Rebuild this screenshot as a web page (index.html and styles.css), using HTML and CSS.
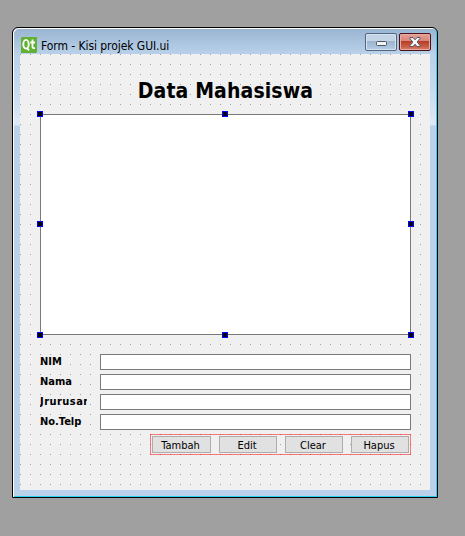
FILE: index.html
```html
<!DOCTYPE html>
<html lang="id">
<head>
<meta charset="utf-8">
<title>Form - Kisi projek GUI.ui</title>
<link rel="stylesheet" href="styles.css">
</head>
<body>
<main class="window">
  <header class="titlebar">
    <svg class="logo" width="16" height="16" viewBox="0 0 16 16"><path fill="#63b132" d="M1 0h15v15l-1 1H0V1z"/><ellipse cx="5" cy="7.2" rx="2.7" ry="4.3" fill="none" stroke="#fff" stroke-width="1.9"/><path d="M6 11l2 2.3M11.5 2.5v7.3q0 1.7 2.5 1.3M9.3 5.5H14" fill="none" stroke="#fff" stroke-width="1.8"/></svg>
    <span class="caption">Form - Kisi projek GUI.ui</span>
    <div class="controls">
      <button class="control minimize" aria-label="Minimize"><svg width="12" height="6" viewBox="0 0 12 6"><rect x="1.5" y=".5" width="10" height="4" rx="1" fill="#f4f4f2" stroke="#4a5464"/></svg></button>
      <button class="control close" aria-label="Close"><svg width="12" height="10" viewBox="0 0 12 10"><path d="M1 .5h3l2 2.3L8 .5h3v1L8.2 5 11 8.5v1H8L6 7.2 4 9.5H1v-1L3.8 5 1 1.5z" fill="#f5f5f5" stroke="#555866"/></svg></button>
    </div>
  </header>
  <section class="client">
    <h1 class="heading">Data Mahasiswa</h1>
    <div class="list">
      <i class="handle top left"></i><i class="handle top center"></i><i class="handle top right"></i>
      <i class="handle middle left"></i><i class="handle middle right"></i>
      <i class="handle bottom left"></i><i class="handle bottom center"></i><i class="handle bottom right"></i>
    </div>
    <div class="fields">
      <label class="field"><span class="name">NIM</span><input></label>
      <label class="field"><span class="name">Nama</span><input></label>
      <label class="field"><span class="name wide">Jrurusan</span><input></label>
      <label class="field"><span class="name">No.Telp</span><input></label>
    </div>
    <div class="actions">
      <button>Tambah</button><button>Edit</button><button>Clear</button><button>Hapus</button>
    </div>
  </section>
</main>
</body>
</html>
```
FILE: styles.css
```css
* { box-sizing: border-box; }
body {
  margin: 0;
  height: 536px;
  padding: 27px 0 0 12px;
  overflow: hidden;
  background: #a0a0a0;
  font: 11px "DejaVu Sans Condensed", "DejaVu Sans", sans-serif;
  font-stretch: condensed;
  color: #000;
}
.window {
  width: 426px;
  height: 471px;
  padding: 0 7px 6px;
  border: 1px solid #000;
  border-radius: 6px 6px 0 0;
  background: linear-gradient(#99b4d1, #b9d1ea 26px, #c5daef 60px, #dde9f7 97px, #b9d1ea 98px);
  box-shadow: inset 1px 1px #fff, inset -1px -1px #27d0ee;
}
.titlebar {
  display: flex;
  height: 26px;
  padding-left: 1px;
}
.logo { margin-top: 9px; }
.caption {
  margin: 11px 0 0 4px;
  line-height: 14px;
  font-size: 12px;
  letter-spacing: -.06px;
  white-space: nowrap;
}
.controls { display: flex; gap: 2px; margin: 5px -1px 0 auto; }
.control {
  display: flex;
  align-items: center;
  justify-content: center;
  width: 32px;
  height: 18px;
  padding: 0;
  border: 1px solid #52667f;
  border-radius: 2px;
}
.minimize { padding-top: 3px; background: linear-gradient(#c3d4e7 0 45%, #9ab3cf 45%, #b5cde5); box-shadow: inset 0 0 0 1px #d5e3f1; }
.close { border-color: #4b1216; background: linear-gradient(#e4a197, #d68577 45%, #b83c27 45%, #cb6047 80%, #d98272); box-shadow: inset 0 0 0 1px #e7aaa2; }
.client {
  display: flex;
  flex-direction: column;
  width: 410px;
  height: 436px;
  padding: 20px 19px 0 20px;
  background: conic-gradient(from 0deg at 1px 1px, #f0f0f0 75%, #a0a0a0 0) 0 0 / 10px 10px;
}
.heading {
  height: 40px;
  margin: 0;
  line-height: 35px;
  text-align: center;
  font-size: 21px;
  letter-spacing: .12px;
  white-space: nowrap;
}
.list {
  position: relative;
  width: 371px;
  height: 221px;
  border: 1px solid #7a7a7a;
  background: #fff;
}
.handle { position: absolute; width: 6px; height: 6px; border: 1px solid #00f; background: #000; }
.top { top: -4px; }
.middle { top: 106px; }
.bottom { bottom: -4px; }
.left { left: -4px; }
.center { left: 181px; }
.right { right: -4px; }
.fields { display: grid; gap: 4px; margin-top: 19px; }
.field { display: flex; height: 16px; }
.name {
  width: 47px;
  margin-right: 13px;
  overflow: hidden;
  line-height: 15px;
  font-weight: bold;
  white-space: nowrap;
}
.wide { letter-spacing: .45px; }
.field input {
  width: 311px;
  height: 16px;
  padding: 0 2px;
  border: 1px solid #7a7a7a;
  background: #fff;
}
.actions {
  display: grid;
  grid-template-columns: 59px 58px 58px 58px;
  gap: 8px;
  width: 261px;
  height: 21px;
  margin: 4px 0 0 110px;
  padding: 1px;
  border: 1px solid rgba(255, 0, 0, .5);
}
.actions button {
  height: 17px;
  padding: 2px 2px 0 0;
  border: 1px solid #adadad;
  background: #e1e1e1;
  font: inherit;
  line-height: 14px;
}
```
